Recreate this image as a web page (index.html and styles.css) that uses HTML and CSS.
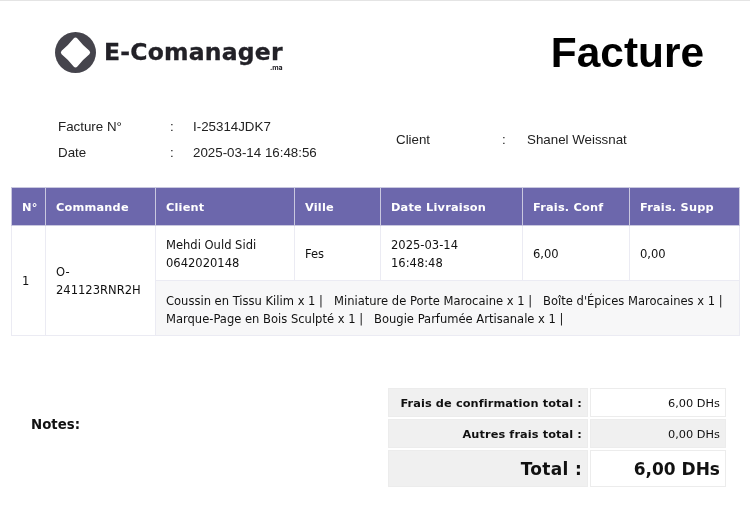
FILE: index.html
```html
<!DOCTYPE html>
<html lang="fr">
<head>
<meta charset="utf-8">
<title>Facture</title>
<link rel="stylesheet" href="styles.css">
</head>
<body>
<div class="page">
  <header class="top">
    <div class="logo">
      <svg class="logo-mark" width="41" height="41" viewBox="0 0 41 41" aria-hidden="true">
        <circle cx="20.5" cy="20.5" r="20.5" fill="#45444c"/>
        <path d="M20.5 5.5 Q21.5 5.5 22.4 6.6 Q27.5 13.2 34.4 18.8 Q36 20.5 34.4 22.2 Q27.5 27.8 22.4 34.4 Q20.5 36.5 18.6 34.4 Q13.5 27.8 6.6 22.2 Q5 20.5 6.6 18.8 Q13.5 13.2 18.6 6.6 Q19.5 5.5 20.5 5.5 Z" fill="#fff"/>
      </svg>
      <div class="logo-text">
        <span class="logo-name">E-Comanager</span>
        <span class="logo-tld">.ma</span>
      </div>
    </div>
    <h1 class="title">Facture</h1>
  </header>

  <section class="info">
    <div class="info-left">
      <div class="info-row"><span class="lab">Facture N°</span><span class="sep">:</span><span>I-25314JDK7</span></div>
      <div class="info-row"><span class="lab">Date</span><span class="sep">:</span><span>2025-03-14 16:48:56</span></div>
    </div>
    <div class="info-right">
      <span class="lab-client">Client</span><span class="sep-client">:</span><span>Shanel Weissnat</span>
    </div>
  </section>

  <table class="orders">
    <colgroup>
      <col class="c1"><col class="c2"><col class="c3"><col class="c4"><col class="c5"><col class="c6"><col class="c7">
    </colgroup>
    <thead>
      <tr><th>N°</th><th>Commande</th><th>Client</th><th>Ville</th><th>Date Livraison</th><th>Frais. Conf</th><th>Frais. Supp</th></tr>
    </thead>
    <tbody>
      <tr class="r1">
        <td rowspan="2">1</td>
        <td rowspan="2">O-241123RNR2H</td>
        <td>Mehdi Ould Sidi<br>0642020148</td>
        <td>Fes</td>
        <td>2025-03-14<br>16:48:48</td>
        <td>6,00</td>
        <td>0,00</td>
      </tr>
      <tr class="r2">
        <td colspan="5">Coussin en Tissu Kilim x 1 | &nbsp; Miniature de Porte Marocaine x 1 | &nbsp; Boîte d'Épices Marocaines x 1 |<br>Marque-Page en Bois Sculpté x 1 | &nbsp; Bougie Parfumée Artisanale x 1 |</td>
      </tr>
    </tbody>
  </table>

  <section class="bottom">
    <div class="notes">Notes:</div>
    <table class="totals">
      <tr class="t1"><th>Frais de confirmation total :</th><td>6,00 DHs</td></tr>
      <tr class="t2"><th>Autres frais total :</th><td>0,00 DHs</td></tr>
      <tr class="t3"><th>Total :</th><td>6,00 DHs</td></tr>
    </table>
  </section>
</div>
</body>
</html>
```
FILE: styles.css
```css
* { box-sizing: border-box; }
html, body { margin: 0; padding: 0; background: #fff; }
body { font-family: "DejaVu Sans", sans-serif; font-size: 11.54px; color: #111; }
.page { width: 750px; height: 509px; overflow: hidden; border-top: 1px solid #e4e4e4; filter: blur(.3px); }

.top { display: flex; justify-content: space-between; align-items: center; height: 99px; padding: 0 46px 0 55px; }
.logo { display: flex; align-items: center; gap: 8px; margin-top: 3px; }
.logo-mark { display: block; }
.logo-text { position: relative; color: #222127; }
.logo-name { font-family: "DejaVu Sans", sans-serif; font-weight: 700; font-size: 23.5px; letter-spacing: .2px; line-height: 24px; display: block; -webkit-text-stroke: .3px #222127; }
.logo-tld { position: absolute; right: 0; top: 24px; line-height: 7px; font-family: "Inter", sans-serif; font-size: 7px; font-weight: 700; }
.title { margin: 0; font-family: "Liberation Sans", Arial, sans-serif; font-weight: 700; font-size: 42.4px; line-height: 46px; color: #000; position: relative; top: 2px; }

.info { display: flex; align-items: center; height: 52px; margin-top: 13px; padding-left: 58px; font-family: "Liberation Sans", Arial, sans-serif; font-size: 13.33px; color: #222; }
.info-left { width: 338px; }
.info-row { display: flex; height: 26px; align-items: center; }
.lab { width: 112px; }
.sep { width: 23px; }
.lab-client { width: 106px; }
.sep-client { width: 25px; }
.info-right { display: flex; }

.orders { margin: 22px 0 0 11px; width: 728px; border-collapse: collapse; table-layout: fixed; }
.c1 { width: 34px; } .c2 { width: 110px; } .c3 { width: 139px; } .c4 { width: 86px; }
.c5 { width: 142px; } .c6 { width: 107px; } .c7 { width: 110px; }
.orders th { background: #6c67ac; color: #fff; font-weight: 700; font-size: 11.33px; text-align: left; height: 38px; padding: 0 10px; border: 1px solid #c9c8df; white-space: nowrap; letter-spacing: .2px; }
.orders td { padding: 1px 10px 0; border: 1px solid #ebebf3; line-height: 18px; vertical-align: middle; }
.r1 td { height: 55px; }
.r2 td { height: 55px; padding-top: 3px; background: #f7f7f8; }

.bottom { display: flex; justify-content: space-between; align-items: center; margin-top: 50px; padding: 0 22px 0 31px; }
.notes { font-weight: 700; font-size: 13.33px; color: #111; margin-bottom: 27px; }
.totals { border-collapse: separate; border-spacing: 2px; width: 342px; table-layout: fixed; }
.totals th, .totals td { text-align: right; padding: 1px 5px 0 10px; border: 1px solid #ececec; }
.totals th { width: 200px; background: #f0f0f0; color: #111; white-space: nowrap; }
.totals td { background: #fff; }
.t1 th, .t1 td { height: 29px; font-size: 11.33px; }
.t1 th, .t2 th { letter-spacing: .1px; }
.t2 th, .t2 td { height: 29px; font-size: 11.33px; }
.t2 td { background: #f0f0f0; }
.t3 th, .t3 td { height: 37px; font-size: 17px; font-weight: 700; color: #111; }
.t3 th { letter-spacing: .3px; }
```
